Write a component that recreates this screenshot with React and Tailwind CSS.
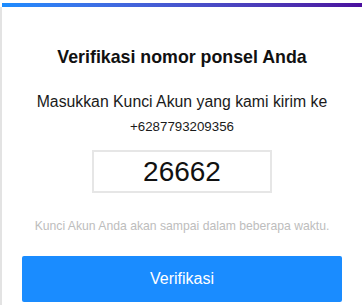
export default function App() {
  const font = { fontFamily: '"Liberation Sans", Arial, sans-serif' };
  return (
    <div className="w-[362px] h-[305px] bg-white overflow-hidden pt-[3px]" style={font}>
      <div className="ml-[2px] h-[4px] bg-gradient-to-r from-[#1a8cff] to-[#4a0e9e]" />
      <div className="h-[300px] border-l-2 border-[#e3e3e3] flex flex-col items-center pt-[40px]">
        <h1 className="text-[17.8px] leading-[20px] font-bold text-[#111]">Verifikasi nomor ponsel Anda</h1>
        <p className="mt-[24px] text-[15.8px] leading-[22px] text-[#1a1a1a]">Masukkan Kunci Akun yang kami kirim ke</p>
        <p className="mt-[5px] text-[13.3px] leading-[18px] text-[#1a1a1a]">+6287793209356</p>
        <div className="mt-[14px] w-[180px] h-[43px] border-2 border-[#e6e6e6] flex items-center justify-center text-[28px] text-[#111]">
          26662
        </div>
        <p className="mt-[25px] text-[12.2px] leading-[16px] text-[#bdbdbd]">Kunci Akun Anda akan sampai dalam beberapa waktu.</p>
        <button className="mt-[22px] w-[320px] h-[46px] rounded-[2px] bg-[#1a8cff] text-white text-[16px] flex items-center justify-center">
          Verifikasi
        </button>
      </div>
    </div>
  );
}
